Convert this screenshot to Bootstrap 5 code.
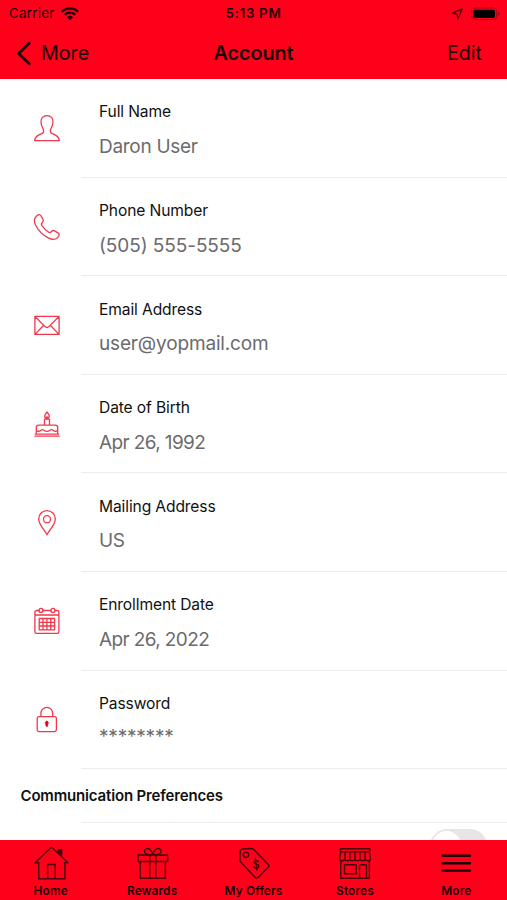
<!DOCTYPE html>
<html lang="en">
<head>
<meta charset="utf-8">
<meta name="viewport" content="width=device-width, initial-scale=1">
<title>Account</title>
<link href="https://cdn.jsdelivr.net/npm/bootstrap@5.3.0/dist/css/bootstrap.min.css" rel="stylesheet">
<style>
body{font-family:Inter,"Liberation Sans",sans-serif;color:#111;background:#fff}
.screen{height:900px}
.red-bar{background:#ff001b;color:#1c0003}
.top-area{height:79px}
.status-line,.title-line{grid-template-columns:1fr auto 1fr}
.status-line{height:27px;font-size:13.4px;line-height:27px;letter-spacing:.25px}
.status-line .clock{font-weight:600;letter-spacing:.65px}
.status-left{padding-left:9px}
.status-left svg{margin-left:6px}
.status-right{padding-right:7px}
.title-line{height:52px;font-size:19.7px;line-height:52px}
.title-line h1{font-size:19.7px;line-height:52px;font-weight:600}
.back-link{padding-left:16px}
.back-link span{margin-left:9px}
.edit-link{padding-right:25px}
.content-area{min-height:0}
.info-row{height:98.6px}
.icon-cell{width:81px;padding-left:32px}
.icon-cell svg{fill:none;stroke:#f0384d;stroke-width:1.3;stroke-linejoin:round;stroke-linecap:round}
.info-cell{border-bottom:1.5px solid #ececee;padding:22.4px 0 0 18px}
.info-label{font-size:15.6px;line-height:22px;letter-spacing:-.12px}
.info-value{font-size:19px;line-height:28px;margin-top:9.6px;color:#6b6b6d;letter-spacing:-.3px}
.value-phone{letter-spacing:-.08px}
.value-mail{letter-spacing:-.16px}
.value-date{letter-spacing:-.62px}
.value-secret{margin-top:8.4px;letter-spacing:-.2px}
.pref-head{height:53px;padding-left:20.5px;font-size:15px;font-weight:600;line-height:54px;letter-spacing:-.16px}
.pref-line{margin-left:81px;border-top:1.5px solid #ececee}
.switch-track{width:57px;height:34px;border-radius:17px;background:#e6e6e7;padding:2px;margin:6px 20.5px 0 0}
.switch-knob{width:29px;height:30px;border-radius:15px;background:#fff}
.tab-area{height:60px}
.tab-area a{flex:1 1 0;color:#1c0003;font-size:11.8px;font-weight:600;line-height:14px;letter-spacing:.15px}
.tab-area svg{fill:none;stroke:#4a0008;stroke-width:1.4;margin-top:5px;stroke-linejoin:round;stroke-linecap:round}
.tab-area span{margin-top:3px}
</style>
</head>
<body>
<div class="screen d-flex flex-column overflow-hidden">
  <header class="red-bar top-area flex-shrink-0">
    <div class="status-line d-grid">
      <div class="status-left d-flex align-items-center"><span>Carrier</span>
        <svg width="18" height="14" viewBox="0 0 18 14" fill="none" stroke="#1c0003" stroke-width="2.3"><path d="M.9 4.7a11.6 11.6 0 0 1 16.2 0M3.7 7.8a7.6 7.6 0 0 1 10.6 0"/><path d="M9 13.3 6 10.2a4.3 4.3 0 0 1 6 0z" fill="#1c0003" stroke="none"/></svg>
      </div>
      <div class="clock text-center">5:13 PM</div>
      <div class="status-right d-flex align-items-center justify-content-end">
        <svg width="12" height="12" viewBox="0 0 12 12" fill="none" stroke="#5a000a" stroke-width="1.3" stroke-linejoin="round"><path d="M11.200 .9 1.200 5.100l4.800.9.900 4.900z"/></svg>
        <svg class="ms-2" width="29" height="14" viewBox="0 0 29 14"><rect x=".7" y="1" width="25" height="11.6" rx="3.4" fill="none" stroke="#a80012" stroke-width="1"/><rect x="2.5" y="2.7" width="21.5" height="8.3" rx="1.8" fill="#000"/><path d="M27 4.8q1.6.4 1.6 2t-1.6 2z" fill="#a80012"/></svg>
      </div>
    </div>
    <nav class="title-line d-grid">
      <a class="back-link d-flex align-items-center text-reset text-decoration-none" href="#">
        <svg width="16" height="25" viewBox="0 0 16 25" fill="none" stroke="#1c0003" stroke-width="2.8" stroke-linecap="round" stroke-linejoin="round"><path d="M13.3 2.2 2.6 12.5l10.7 10.3"/></svg>
        <span>More</span></a>
      <h1 class="m-0">Account</h1>
      <a class="edit-link text-end text-reset text-decoration-none" href="#">Edit</a>
    </nav>
  </header>

  <main class="content-area flex-grow-1 overflow-hidden">
    <div class="info-row d-flex">
      <div class="icon-cell d-flex align-items-center"><svg width="30" height="30" viewBox="0 0 30 30"><path d="M15 2.600c-4 0-6.200 2.600-6 6.300.1 3.600 1.500 5.500 2.300 7.300.7 1.900.3 3.600-1.700 4.500-3.200 1.400-6.500 2.200-6.900 7h24.600c-.4-4.800-3.700-5.600-6.900-7-2-.9-2.400-2.600-1.700-4.500.8-1.800 2.200-3.700 2.300-7.300.2-3.700-2-6.300-6-6.300z"/></svg></div>
      <div class="info-cell flex-grow-1"><div class="info-label">Full Name</div><div class="info-value">Daron User</div></div>
    </div>
    <div class="info-row d-flex">
      <div class="icon-cell d-flex align-items-center"><svg width="30" height="30" viewBox="0 0 30 30"><path d="M4.300 4.300C6 2.300 7.800 2.100 9 3.900l2 3.400c.8 1.400.4 2.300-.7 3.200-1.500 1.200-1.300 1.900-.2 3.300 1.700 2.300 3.700 4.300 6 6 1.400 1.100 2.100 1.300 3.300-.2.900-1.100 1.800-1.500 3.200-.7l3.400 2c1.800 1.200 1.600 3-.4 4.700-2.200 2.200-5.500 2.300-9 .6C11 23.400 6.400 18.600 3.700 13.300 2 9.800 2.100 6.500 4.300 4.300z"/></svg></div>
      <div class="info-cell flex-grow-1"><div class="info-label">Phone Number</div><div class="info-value value-phone">(505) 555-5555</div></div>
    </div>
    <div class="info-row d-flex">
      <div class="icon-cell d-flex align-items-center"><svg width="30" height="30" viewBox="0 0 30 30"><path d="M2.900 6.400h24.200v18H2.900zM3.200 6.700l9.900 9.900q1.900 1.700 3.800 0l9.900-9.900M3.200 24.100l8-8.400M26.800 24.100l-8-8.400"/></svg></div>
      <div class="info-cell flex-grow-1"><div class="info-label">Email Address</div><div class="info-value value-mail">user@yopmail.com</div></div>
    </div>
    <div class="info-row d-flex">
      <div class="icon-cell d-flex align-items-center"><svg width="30" height="30" viewBox="0 0 30 30"><path d="M3 27.200h24M3.300 25.200h23.400M4.300 25V18.500q0-2.300 2.300-2.300h16.800q2.300 0 2.300 2.300V25M4.500 21.500q2.300 1.600 4.500-.3 1.500-1 3 0 3 2.200 6 0 1.500-1 3 0 2.200 1.900 4.500.3M12.500 16v-5.800h5V16M15 10V7.500M15 3c-1.500 2-2.300 2.700-2.300 3.900 0 1.300 1 2.100 2.300 2.100s2.300-.8 2.300-2.100C17.300 5.700 16.500 5 15 3z"/></svg></div>
      <div class="info-cell flex-grow-1"><div class="info-label">Date of Birth</div><div class="info-value value-date">Apr 26, 1992</div></div>
    </div>
    <div class="info-row d-flex">
      <div class="icon-cell d-flex align-items-center"><svg width="30" height="30" viewBox="0 0 30 30"><path d="M15 26.800C12.300 21.500 6.700 16.500 6.700 10.900a8.300 8.300 0 0 1 16.600 0c0 5.600-5.600 10.600-8.300 15.900z"/><circle cx="15" cy="11.200" r="3.500"/></svg></div>
      <div class="info-cell flex-grow-1"><div class="info-label">Mailing Address</div><div class="info-value">US</div></div>
    </div>
    <div class="info-row d-flex">
      <div class="icon-cell d-flex align-items-center"><svg width="30" height="30" viewBox="0 0 30 30"><path d="M7 4.500H4.600q-1.700 0-1.700 1.700v19.500q0 1.700 1.700 1.700h20.600q1.700 0 1.700-1.700V6.200q0-1.700-1.700-1.700h-2.400M10.900 4.500h8M2.900 9h24"/><circle cx="8.900" cy="4.400" r="2"/><circle cx="20.900" cy="4.400" r="2"/><path d="M7.200 12.500h15.400v11.300H7.200zM7.200 16.300h15.400M7.200 20h15.400M11 12.500v11.300M14.900 12.500v11.300M18.800 12.500v11.300"/></svg></div>
      <div class="info-cell flex-grow-1"><div class="info-label">Enrollment Date</div><div class="info-value value-date">Apr 26, 2022</div></div>
    </div>
    <div class="info-row d-flex">
      <div class="icon-cell d-flex align-items-center"><svg width="30" height="30" viewBox="0 0 30 30"><rect x="5.200" y="11.600" width="19.200" height="15" rx="1.800"/><path d="M8.900 11.500V8.300a5.900 5.900 0 0 1 11.800 0v3.200"/><path d="M14.800 16.300a1.500 1.500 0 0 1 1 2.600l-.3 2.400h-1.400l-.3-2.400a1.500 1.500 0 0 1 1-2.600z" fill="#e8001c" stroke="#e8001c" stroke-width=".8"/></svg></div>
      <div class="info-cell flex-grow-1"><div class="info-label">Password</div><div class="info-value value-secret">********</div></div>
    </div>
    <h2 class="pref-head m-0">Communication Preferences</h2>
    <div class="pref-line d-flex justify-content-end"><div class="switch-track"><div class="switch-knob"></div></div></div>
  </main>

  <footer class="red-bar tab-area d-flex flex-shrink-0">
    <a class="d-flex flex-column align-items-center text-decoration-none" href="#"><svg width="36" height="36" viewBox="0 0 36 36"><path d="M5.700 17.500v16.300h26.200V17.500M5.700 17.700H2L18.600 2l16.400 15.700h-3.600M14.600 33.600V19.500h7.600v14.100"/><path d="M25.400 7V5h3.300v5z" fill="#4a0008"/></svg><span>Home</span></a>
    <a class="d-flex flex-column align-items-center text-decoration-none" href="#"><svg width="36" height="36" viewBox="0 0 36 36"><path d="M4 10h29.600v6.500H4zM6.200 16.500h25.200v16.700H6.200zM15.800 10v23M21.800 10v23M18.800 9.500C14.800 10 10.400 9 10.500 6c.1-2.500 3-3.300 5.200-1.800 1.700 1.300 2.600 3.300 3.100 5.300.5-2 1.400-4 3.100-5.300C24.100 2.700 27 3.500 27.100 6c.1 3-4.300 4-8.300 3.500z"/></svg><span>Rewards</span></a>
    <a class="d-flex flex-column align-items-center text-decoration-none" href="#"><svg width="36" height="36" viewBox="0 0 36 36"><path d="M4.300 6.400q0-2.300 2.300-2.400l8.700-.5q1.500 0 2.500 1L32 19.200q1.700 1.700 0 3.400L22.300 32.200q-1.700 1.700-3.300 0L5 17.200q-1-1.200-1-2.500z"/><circle cx="10" cy="9.800" r="2.700"/><path d="M22.500 16.500c-1.200-1.600-4.500-1.600-4.700.5-.2 3 5.100 1.300 5.100 4.300 0 2.400-4 2.500-5.500.4M19.400 13.500l1.500 11.500"/></svg><span>My Offers</span></a>
    <a class="d-flex flex-column align-items-center text-decoration-none" href="#"><svg width="36" height="36" viewBox="0 0 36 36"><path d="M3.300 3.700h29.400v3H3.300zM3.800 6.700 2.600 13.500M32.200 6.700l1.200 6.800M8 7v7M13 7v7M18 7v7M23 7v7M28 7v7M2.600 13.500c0 3 5.200 3 5.200 0 0 3 5.100 3 5.100 0 0 3 5.100 3 5.100 0 0 3 5.100 3 5.100 0 0 3 5.100 3 5.100 0 0 3 5.200 3 5.200 0M3.700 16v17.300h28.700V16M7.500 19.800h11.700v9H7.500zM22.500 33V19.800h7V33"/></svg><span>Stores</span></a>
    <a class="d-flex flex-column align-items-center text-decoration-none" href="#"><svg width="36" height="36" viewBox="0 0 36 36"><path d="M4.500 10.800h27.500M4.500 18.200h27.500M4.500 25.600h27.500" stroke="#1c0003" stroke-width="2.400"/></svg><span>More</span></a>
  </footer>
</div>
<script src="https://cdn.jsdelivr.net/npm/bootstrap@5.3.0/dist/js/bootstrap.bundle.min.js"></script>
</body>
</html>
